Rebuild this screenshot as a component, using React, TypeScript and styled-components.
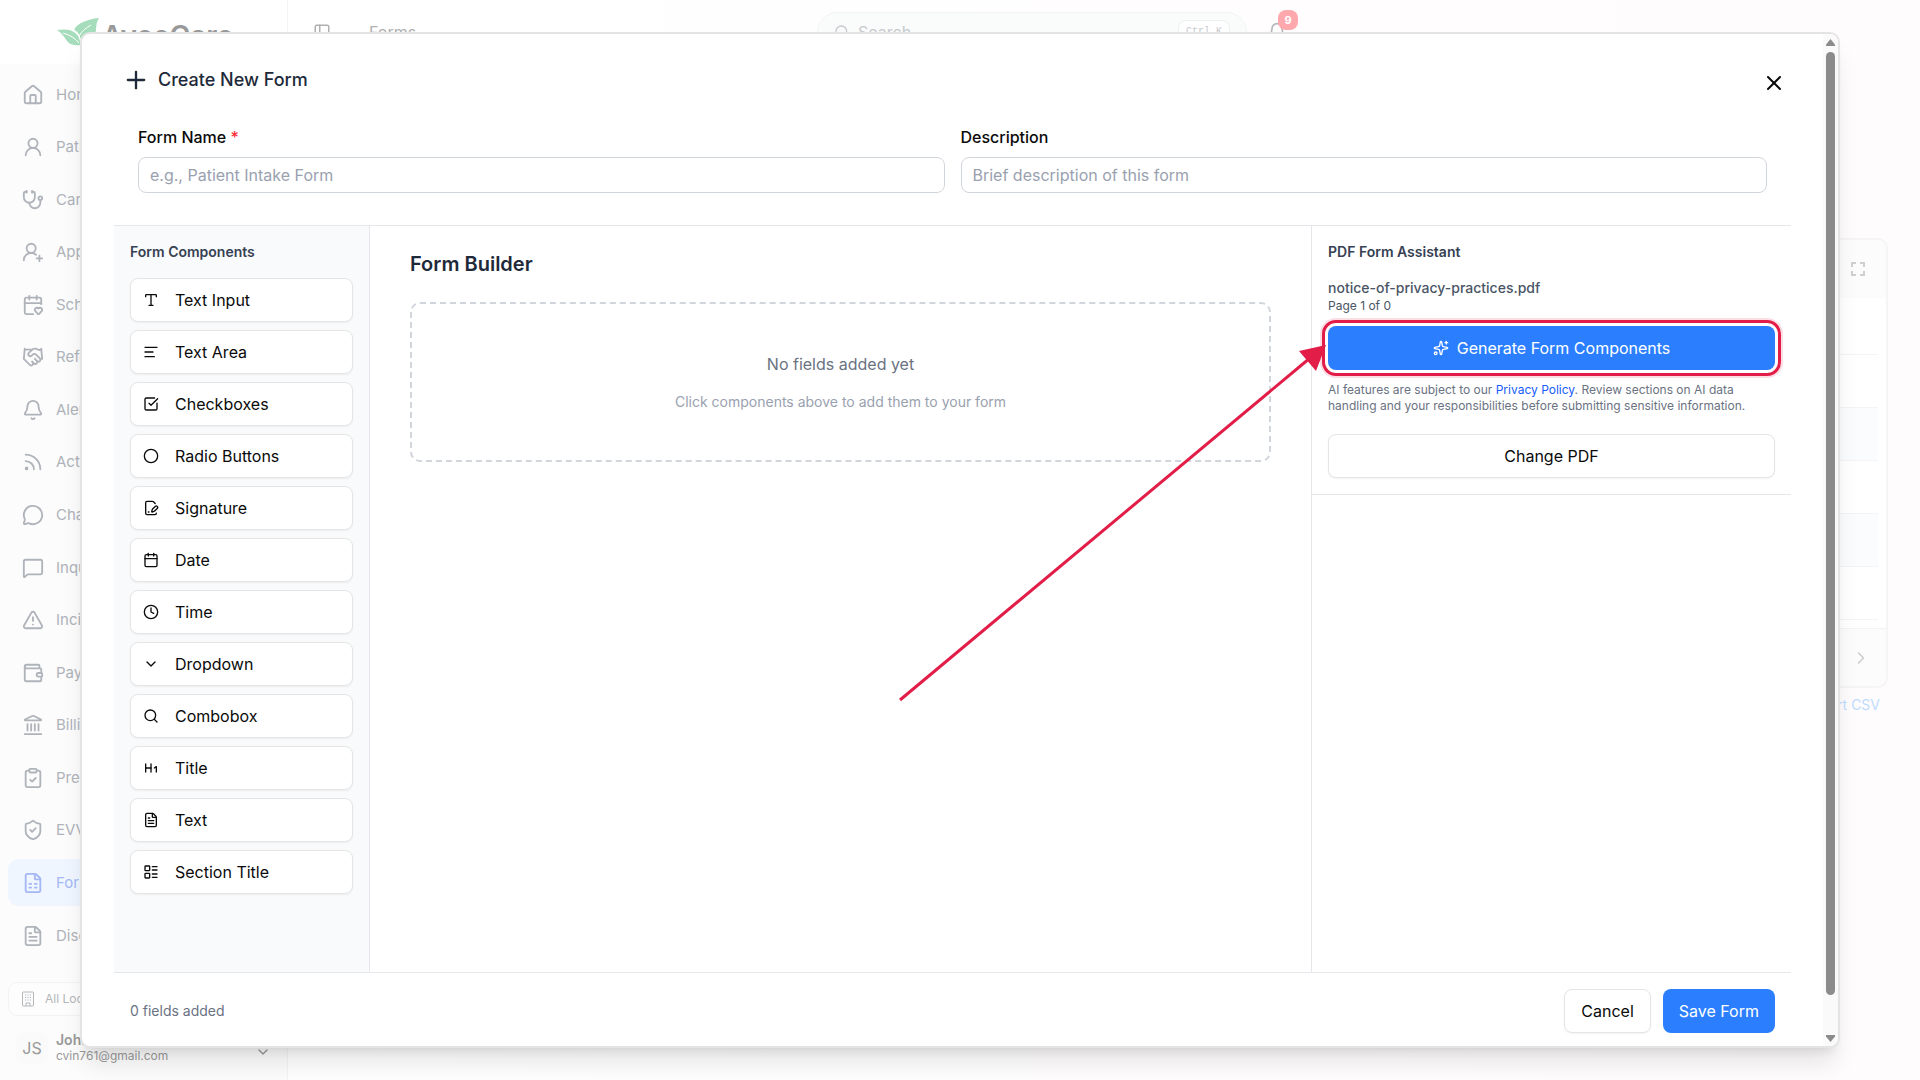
import React from "react";
import styled, { createGlobalStyle } from "styled-components";
import {
  House, UserRound, Stethoscope, UserRoundPlus, CalendarHeart, Handshake, Bell, Rss,
  MessageCircle, MessageSquare, TriangleAlert, Wallet, Landmark, ClipboardCheck,
  ShieldCheck, FileSpreadsheet, FileText, Type, TextAlignStart, SquareCheckBig, Circle,
  FilePenLine, Calendar, Clock, ChevronDown, Search, Heading1, LayoutList, Plus, X,
  Sparkles, PanelLeft, ChevronRight,
} from "lucide-react";

const Global = createGlobalStyle`
  *, *::before, *::after { box-sizing: border-box; }
  body { margin: 0; font-family: Inter, "Liberation Sans", sans-serif; font-size: 16px; line-height: 24px; color: #0a0a0a; background: #fff; }
  button, input { font: inherit; color: inherit; }
  h1, h2, h3, p { margin: 0; }
`;

const Page = styled.div`
  position: relative;
  display: flex;
  height: 100vh;
  overflow: hidden;
`;

/* ---------- application behind the dialog ---------- */
const Sidebar = styled.aside`
  width: 288px;
  flex: none;
  display: flex;
  flex-direction: column;
  border-right: 1px solid #f4f4f4;
  background: #fcfcfc;
  padding-bottom: 16px;
`;
const Brand = styled.div`
  height: 64px;
  flex: none;
  display: flex;
  align-items: flex-start;
  padding: 16px 0 0 56px;
  background: #fff;
`;
const BrandName = styled.span`
  font-size: 28px;
  line-height: 40px;
  font-weight: 600;
  color: #999;
`;
const Nav = styled.nav`
  flex: 1;
  display: flex;
  flex-direction: column;
  justify-content: space-between;
  padding: 7px 8px 23px;
`;
const NavLink = styled.a<{ $active?: boolean }>`
  height: 47px;
  display: flex;
  align-items: center;
  gap: 12px;
  padding: 0 14px;
  border-radius: 10px;
  font-size: 15px;
  text-decoration: none;
  color: ${(p) => (p.$active ? "#a5b8f5" : "#afb3ba")};
  background: ${(p) => (p.$active ? "#eff6ff" : "transparent")};
`;
const Location = styled.button`
  height: 34px;
  margin: 0 8px;
  display: flex;
  align-items: center;
  gap: 10px;
  padding: 0 12px;
  border: 1px solid #f3f3f3;
  border-radius: 10px;
  background: #fdfdfd;
  font-size: 12px;
  color: #b4b6ba;
`;
const Account = styled.button`
  display: flex;
  align-items: center;
  gap: 8px;
  margin: 16px 8px 0;
  padding: 0 8px;
  border: 0;
  background: none;
  text-align: left;
  color: #999;
  svg { align-self: flex-end; margin-bottom: 4px; }
`;
const Avatar = styled.span`
  width: 32px;
  height: 32px;
  border-radius: 8px;
  background: #fafafa;
  line-height: 32px;
  text-align: center;
`;
const AccountText = styled.span`
  flex: 1;
  display: grid;
  font-size: 12px;
  line-height: 16px;
  strong { font-size: 14px; font-weight: 600; }
`;
const Main = styled.main`
  flex: 1;
  background: linear-gradient(90deg, #fff, #fffcfd);
`;
const TopBar = styled.header`
  display: grid;
  grid-template-columns: 1fr 430px 1fr;
  align-items: center;
  padding: 12px 169px 0 25px;
  color: #b0b0b0;
`;
const Crumb = styled.div`
  display: flex;
  align-items: center;
  gap: 38px;
`;
const SearchBox = styled.label`
  height: 40px;
  display: flex;
  align-items: center;
  gap: 8px;
  padding: 0 16px;
  border: 1px solid #f2f5f4;
  border-radius: 20px;
  background: #fafcfb;
  color: #c6c9ce;
  input { flex: 1; min-width: 0; border: 0; background: none; outline: 0; padding: 0; }
  input::placeholder { color: #c6c9ce; opacity: 1; }
  kbd { border: 1px solid #eef0f0; border-radius: 8px; background: #fff; padding: 0 7px; font: 10px/22px "Liberation Mono", monospace; }
`;
const Alerts = styled.button`
  position: relative;
  justify-self: start;
  margin-left: 20px;
  padding: 0;
  border: 0;
  background: none;
  color: #b4b6ba;
  display: flex;
`;
const Count = styled.span`
  position: absolute;
  left: 11px;
  top: -12px;
  width: 20px;
  height: 20px;
  border-radius: 8px;
  background: #ffa8ad;
  color: #fff;
  font-size: 11px;
  line-height: 20px;
  font-weight: 700;
`;
const Listing = styled.section`
  margin: 186px 32px 0;
  border: 2px solid #f6f5f5;
  border-radius: 10px;
  background: #fff;
  overflow: hidden;
`;
const ListingBar = styled.div`
  height: 58px;
  display: flex;
  align-items: center;
  justify-content: flex-end;
  padding: 0 21px;
  background: #fcfcfc;
  color: #cfcfcf;
`;
const ListingRows = styled.div`
  padding: 4px 8px 8px 0;
`;
const ListingRow = styled.div<{ $tint?: boolean }>`
  height: 53px;
  border-bottom: 1px solid #f4f4f5;
  background: ${(p) => (p.$tint ? "#fbfcfd" : "#fff")};
`;
const Pager = styled(ListingBar)`
  padding: 0 15px;
  border-top: 1px solid #f3f3f3;
`;
const ExportRow = styled.div`
  display: flex;
  justify-content: flex-end;
  padding: 5px 40px 0;
  font-size: 14px;
  a { color: #bedbff; text-decoration: none; }
`;

/* ---------- dialog ---------- */
const Dialog = styled.div`
  position: absolute;
  inset: 32px 80px;
  display: flex;
  border: 2px solid #e4e4e4;
  border-radius: 10px;
  background: #fff;
  overflow: hidden;
  box-shadow: 0 20px 25px -5px rgba(0, 0, 0, 0.1), 0 8px 10px -6px rgba(0, 0, 0, 0.1);
`;
const DialogBody = styled.div`
  flex: 1;
  min-width: 0;
  display: flex;
  flex-direction: column;
  padding: 0 32px;
`;
const DialogHead = styled.header`
  flex: none;
  display: flex;
  align-items: center;
  gap: 8px;
  padding: 31px 5px 0 8px;
  color: #1e2939;
  h1 { flex: 1; font-size: 18px; line-height: 28px; font-weight: 500; }
`;
const IconButton = styled.button`
  display: flex;
  padding: 6px 0 0;
  border: 0;
  background: none;
  color: #0a0a0a;
`;
const Fields = styled.div`
  flex: none;
  display: grid;
  grid-template-columns: 1fr 1fr;
  gap: 16px;
  padding: 30px 24px 32px;
`;
const Field = styled.label`
  display: grid;
  gap: 8px;
  font-weight: 500;
  em { color: #fb2c36; font-style: normal; }
  input {
    height: 36px;
    width: 100%;
    padding: 0 11px;
    border: 1px solid #d1d5dc;
    border-radius: 8px;
    background: #fff;
    font-weight: 400;
  }
  input::placeholder { color: #99a1af; opacity: 1; }
`;
const Workspace = styled.div`
  flex: 1;
  min-height: 0;
  display: grid;
  grid-template-columns: 256px 1fr 480px;
  border-top: 1px solid #e5e7eb;
  border-bottom: 1px solid #e5e7eb;
`;
const Palette = styled.section`
  display: flex;
  flex-direction: column;
  gap: 8px;
  padding: 16px;
  border-right: 1px solid #e5e7eb;
  background: #f9fafb;
`;
const PanelTitle = styled.h3`
  font-size: 14px;
  line-height: 20px;
  font-weight: 600;
  color: #364153;
  margin-bottom: 8px;
`;
const Button = styled.button<{ $primary?: boolean; $start?: boolean }>`
  height: 44px;
  display: flex;
  flex: none;
  align-items: center;
  justify-content: ${(p) => (p.$start ? "flex-start" : "center")};
  gap: ${(p) => (p.$start ? 16 : 8)}px;
  padding: 0 ${(p) => (p.$start ? 12 : 16)}px;
  border: ${(p) => (p.$primary ? "0" : "1px solid #e5e5e5")};
  border-radius: 8px;
  background: ${(p) => (p.$primary ? "#2b7fff" : "#fff")};
  color: ${(p) => (p.$primary ? "#fff" : "#0a0a0a")};
  box-shadow: ${(p) => (p.$primary ? "none" : "0 1px 2px rgba(0, 0, 0, 0.05)")};
`;
const Builder = styled.section`
  padding: 24px 40px;
  h2 { font-size: 20px; line-height: 28px; font-weight: 600; color: #1e2939; }
`;
const DropZone = styled.div`
  display: grid;
  gap: 16px;
  margin-top: 24px;
  padding: 48px 0;
  border: 2px dashed #d1d5dc;
  border-radius: 10px;
  text-align: center;
  color: #6a7282;
  small { font-size: 14px; line-height: 20px; color: #99a1af; }
`;
const Assistant = styled.section`
  border-left: 1px solid #e5e7eb;
`;
const AssistantBody = styled.div`
  display: flex;
  flex-direction: column;
  padding: 16px;
  border-bottom: 1px solid #e5e7eb;
`;
const FileName = styled.p`
  margin-top: 8px;
  font-size: 14px;
  line-height: 20px;
  font-weight: 500;
  color: #4a5565;
`;
const Small = styled.p`
  font-size: 12px;
  line-height: 16px;
  color: #6a7282;
  a { color: #155dfc; text-decoration: none; }
`;
const PageCount = styled(Small)`
  color: #4a5565;
`;
const Highlight = styled.div`
  display: grid;
  margin: 12px 0;
  border-radius: 8px;
  outline: 3px solid #e11d48;
  outline-offset: 3px;
  box-shadow: 0 0 0 3px #fff, 0 0 0 8px rgba(225, 29, 72, 0.15);
`;
const ChangeRow = styled.div`
  display: grid;
  margin-top: 20px;
`;
const DialogFoot = styled.footer`
  flex: none;
  display: flex;
  align-items: center;
  gap: 12px;
  padding: 16px 16px 13px;
  p { flex: 1; font-size: 14px; line-height: 20px; color: #6a7282; }
`;
const Scrollbar = styled.div`
  width: 15px;
  display: flex;
  flex-direction: column;
  align-items: center;
  padding: 5px 0 4px;
  background: #fafafa;
  color: #8b8b8b;
`;
const Thumb = styled.div`
  width: 9px;
  flex: 1;
  margin: 6px 0 40px;
  border-radius: 5px;
  background: #8b8b8b;
`;
const Pointer = styled.svg`
  position: absolute;
  left: 896px;
  top: 340px;
  pointer-events: none;
`;

const nav: [React.ElementType, string][] = [
  [House, "Home"], [UserRound, "Patients"], [Stethoscope, "Caregivers"], [UserRoundPlus, "Applicants"],
  [CalendarHeart, "Schedule"], [Handshake, "Referrals"], [Bell, "Alerts"], [Rss, "Activity"],
  [MessageCircle, "Chat"], [MessageSquare, "Inquiries"], [TriangleAlert, "Incidents"], [Wallet, "Payroll"],
  [Landmark, "Billing"], [ClipboardCheck, "Pre-Auth"], [ShieldCheck, "EVV"], [FileSpreadsheet, "Forms"],
  [FileText, "Disclosures"],
];

const parts: [React.ElementType, string][] = [
  [Type, "Text Input"], [TextAlignStart, "Text Area"], [SquareCheckBig, "Checkboxes"],
  [Circle, "Radio Buttons"], [FilePenLine, "Signature"], [Calendar, "Date"], [Clock, "Time"],
  [ChevronDown, "Dropdown"], [Search, "Combobox"], [Heading1, "Title"], [FileText, "Text"],
  [LayoutList, "Section Title"],
];

const listingTints = [false, false, true, false, true, false];

const Leaf = () => (
  <svg width="46" height="32" viewBox="0 0 46 32" aria-hidden="true">
    <path d="M1 14c7-1 13-1 17 2 4 3 6 6 7 13-6 1-11 0-14-4-3-4-5-8-10-11z" fill="#a5dcbb" />
    <path d="M43 2C31 3 20 8 18 14c3 2 5 4 6 7l2 8c9-3 13-8 14-15 0-5 1-9 3-12z" fill="#a5dcbb" />
    <path d="M7 17c7 2 12 5 16 10M23 20c3-5 7-8 12-11" fill="none" stroke="#fff" strokeWidth="1" />
    <path d="M18 14c4 2 6 6 7 15" fill="none" stroke="#fff" strokeWidth="1" />
  </svg>
);

const Building = () => (
  <svg width="14" height="16" viewBox="0 0 14 16" fill="none" stroke="currentColor" aria-hidden="true">
    <rect x="1.5" y="1" width="11" height="14" rx="1" />
    <path d="M4 4h7M4 6.5h7M4 9h7" strokeDasharray="1.2 1.2" />
    <path d="M5 15v-3h4v3" />
  </svg>
);

const Corners = () => (
  <svg width="14" height="14" viewBox="0 0 14 14" fill="none" stroke="currentColor" strokeWidth="2" aria-hidden="true">
    <path d="M1 5V1h4M9 1h4v4M13 9v4H9M5 13H1V9" />
  </svg>
);

export default function App() {
  return (
    <Page>
      <Global />
      <Sidebar>
        <Brand><Leaf /><BrandName>AveeCare</BrandName></Brand>
        <Nav>
          {nav.map(([Icon, name]) => (
            <NavLink key={name} href="#" $active={name === "Forms"}><Icon size={22} />{name}</NavLink>
          ))}
        </Nav>
        <Location><Building />All Locations</Location>
        <Account>
          <Avatar>JS</Avatar>
          <AccountText><strong>John Smith</strong>cvin761@gmail.com</AccountText>
          <ChevronDown size={16} />
        </Account>
      </Sidebar>
      <Main>
        <TopBar>
          <Crumb><PanelLeft size={18} />Forms</Crumb>
          <SearchBox><Search size={16} /><input placeholder="Search..." aria-label="Search" /><kbd>Ctrl K</kbd></SearchBox>
          <Alerts aria-label="Alerts"><Bell size={20} /><Count>9</Count></Alerts>
        </TopBar>
        <Listing>
          <ListingBar><Corners /></ListingBar>
          <ListingRows>
            {listingTints.map((tint, n) => <ListingRow key={n} $tint={tint} />)}
          </ListingRows>
          <Pager><ChevronRight size={20} /></Pager>
        </Listing>
        <ExportRow><a href="#">Export CSV</a></ExportRow>
      </Main>

      <Dialog role="dialog" aria-label="Create New Form">
        <DialogBody>
          <DialogHead>
            <Plus size={28} />
            <h1>Create New Form</h1>
            <IconButton aria-label="Close"><X size={24} /></IconButton>
          </DialogHead>
          <Fields>
            <Field><span>Form Name <em>*</em></span><input placeholder="e.g., Patient Intake Form" /></Field>
            <Field><span>Description</span><input placeholder="Brief description of this form" /></Field>
          </Fields>
          <Workspace>
            <Palette>
              <PanelTitle>Form Components</PanelTitle>
              {parts.map(([Icon, name]) => (
                <Button key={name} $start><Icon size={16} />{name}</Button>
              ))}
            </Palette>
            <Builder>
              <h2>Form Builder</h2>
              <DropZone>
                <p>No fields added yet</p>
                <small>Click components above to add them to your form</small>
              </DropZone>
            </Builder>
            <Assistant>
              <AssistantBody>
                <PanelTitle>PDF Form Assistant</PanelTitle>
                <FileName>notice-of-privacy-practices.pdf</FileName>
                <PageCount>Page 1 of 0</PageCount>
                <Highlight><Button $primary><Sparkles size={16} />Generate Form Components</Button></Highlight>
                <Small>
                  AI features are subject to our <a href="#">Privacy Policy</a>. Review sections on AI data
                  handling and your responsibilities before submitting sensitive information.
                </Small>
                <ChangeRow><Button>Change PDF</Button></ChangeRow>
              </AssistantBody>
            </Assistant>
          </Workspace>
          <DialogFoot>
            <p>0 fields added</p>
            <Button>Cancel</Button>
            <Button $primary>Save Form</Button>
          </DialogFoot>
        </DialogBody>
        <Scrollbar aria-hidden="true">
          <svg width="9" height="7" viewBox="0 0 9 7"><path d="M4.5 0 9 5.5V7H0V5.5z" fill="currentColor" /></svg>
          <Thumb />
          <svg width="9" height="7" viewBox="0 0 9 7"><path d="M4.5 7 9 1.5V0H0v1.5z" fill="currentColor" /></svg>
        </Scrollbar>
      </Dialog>

      <Pointer width="432" height="364" viewBox="0 0 432 364" aria-hidden="true">
        <path d="M4 360 414 18" stroke="#e11d48" strokeWidth="3" />
        <path d="M430 5 403 11 420 31z" fill="#e11d48" />
      </Pointer>
    </Page>
  );
}
